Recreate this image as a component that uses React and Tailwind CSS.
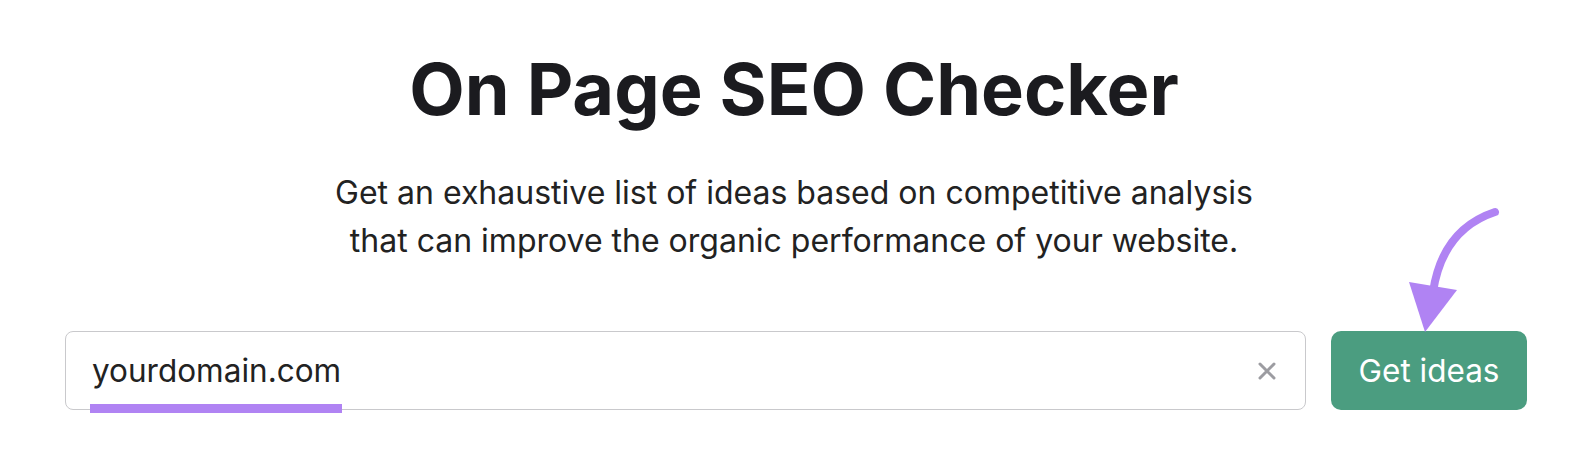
import React from "react";

const Arrow = () => (
  <svg
    className="absolute left-[1390px] top-[200px] pointer-events-none"
    width="120"
    height="140"
    viewBox="0 0 120 140"
    fill="none"
  >
    <path
      d="M105 12 C 75 22, 50 45, 43 92"
      stroke="#b083f3"
      strokeWidth="8"
      strokeLinecap="round"
    />
    <path d="M19 82 L67 90 L35 132 Z" fill="#b083f3" />
  </svg>
);

const App = () => {
  return (
    <div className="relative w-[1588px] h-[476px] bg-white text-[#1b1b1f] font-['Inter','Liberation_Sans',sans-serif] overflow-hidden">
      <h1 className="pt-[52px] text-center text-[72px] leading-[74px] font-bold">
        On Page SEO Checker
      </h1>
      <p className="mt-[43px] text-center text-[32px] leading-[48px] text-[#222]">
        Get an exhaustive list of ideas based on competitive analysis
        <br />
        that can improve the organic performance of your website.
      </p>
      <div className="flex items-stretch gap-[25px] pl-[65px] pr-[61px] mt-[66px]">
        <div className="relative flex-1 h-[79px] flex items-center border border-[#c9c9cc] rounded-[8px] pl-[26px] pr-[28px]">
          <span className="flex-1 text-[31.5px] text-[#222]">yourdomain.com</span>
          <svg width="20" height="20" viewBox="0 0 20 20">
            <path
              d="M3 3 L17 17 M17 3 L3 17"
              stroke="#9c9ca1"
              strokeWidth="3"
              strokeLinecap="round"
            />
          </svg>
          <div className="absolute left-[24px] top-[72px] w-[252px] h-[9px] bg-[#b083f3]" />
        </div>
        <button className="w-[196px] h-[79px] rounded-[10px] bg-[#4b9d80] text-white text-[31.5px]">
          Get ideas
        </button>
      </div>
      <Arrow />
    </div>
  );
};

export default App;
